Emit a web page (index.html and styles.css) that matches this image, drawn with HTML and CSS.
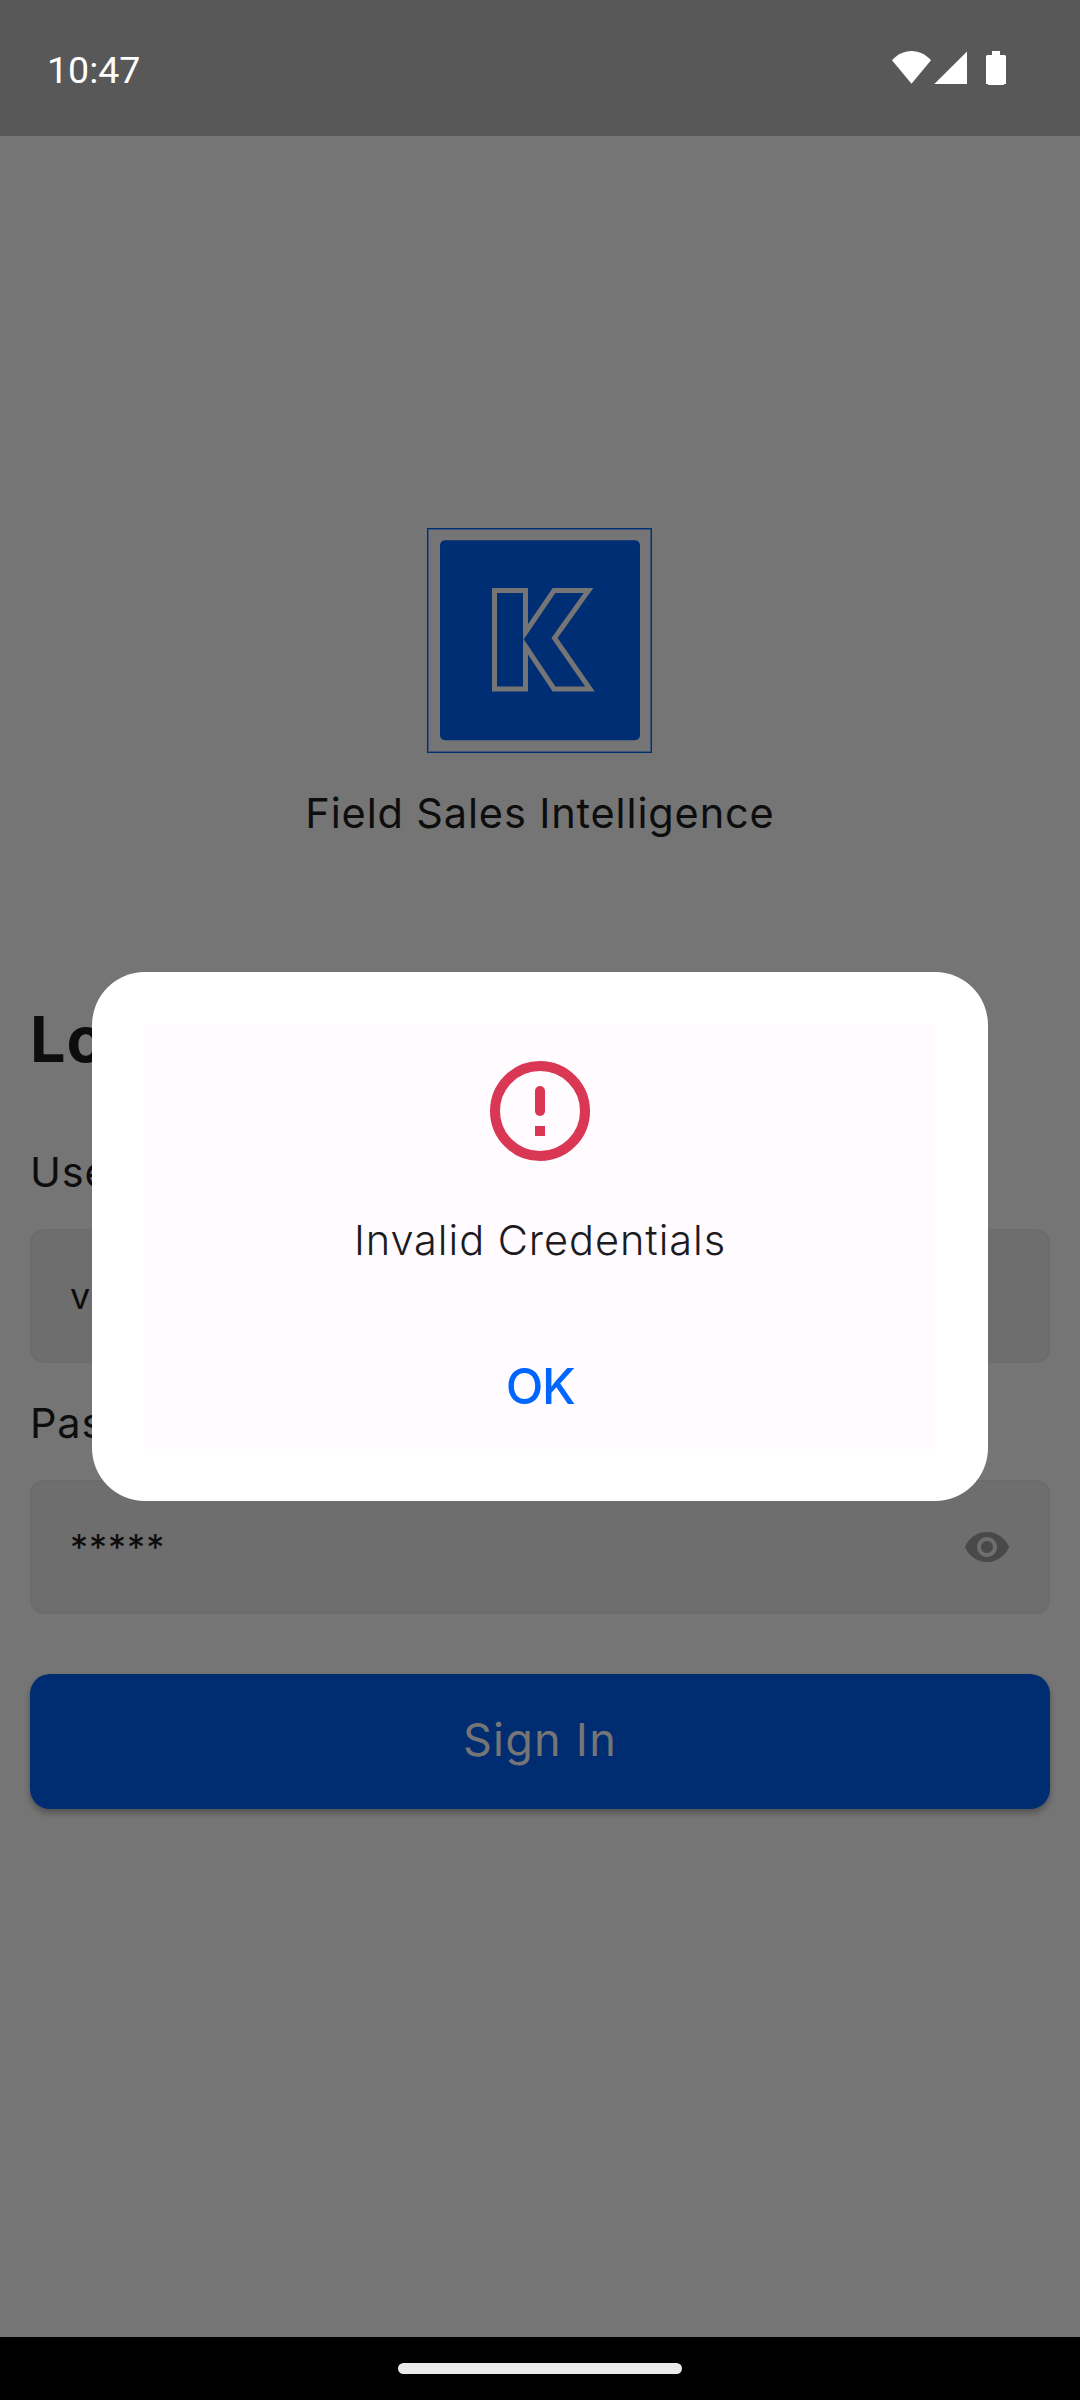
FILE: index.html
```html
<!DOCTYPE html>
<html lang="en">
<head>
<meta charset="utf-8">
<title>Login</title>
<link rel="stylesheet" href="styles.css">
</head>
<body>
<div class="screen">
  <header class="status">
    <span class="clock">10:47</span>
    <svg class="status-icons" width="116" height="36" viewBox="0 0 116 36" fill="#fff">
      <path d="M0 9.300C5 3.600 12 0 19.500 0S34 3.600 39 9.300L19.500 32.700Z"/>
      <path d="M42.300 33L75 .5V33Z"/>
      <path d="M100 0h8v4h5l1 1v28h-2v1h-16v-1h-2V5l1-1h5z"/>
    </svg>
  </header>

  <main class="login">
    <svg class="logo" width="225" height="225" viewBox="0 0 225 225">
      <clipPath id="arm"><rect x="96.300" y="50" width="80" height="120"/></clipPath>
      <rect x="1" y="1" width="223" height="223" fill="none" stroke="#3f567a" stroke-width="2"/>
      <rect x=".5" y=".5" width="224" height="224" fill="none" stroke="#002e75"/>
      <rect x="13" y="12.300" width="200" height="200" rx="5" fill="#002e75"/>
      <g fill="#002e75" stroke="#757575" stroke-width="5">
        <path d="M67.500 62.500H98.500V161H67.500Z"/>
        <path clip-path="url(#arm)" d="M127 62.500H161.500L127.500 110L163 161H127L93.800 111.300Z"/>
      </g>
    </svg>
    <p class="tagline">Field Sales Intelligence</p>
    <h1 class="title">Login</h1>
    <label class="label">Username</label>
    <div class="field"><span>v</span></div>
    <label class="label">Password</label>
    <div class="field">
      <span class="mask">*****</span>
      <svg class="eye" width="48" height="48" viewBox="0 0 24 24" fill="#494949"><path d="M12 4.500C7 4.500 2.730 7.610 1 12c1.730 4.390 6 7.500 11 7.500s9.270-3.110 11-7.500c-1.730-4.390-6-7.500-11-7.500zM12 17c-2.760 0-5-2.240-5-5s2.240-5 5-5 5 2.240 5 5-2.240 5-5 5zm0-8c-1.660 0-3 1.340-3 3s1.340 3 3 3 3-1.340 3-3-1.340-3-3-3z"/></svg>
    </div>
    <button class="submit">Sign In</button>
  </main>

  <footer class="navbar"><div class="handle"></div></footer>

  <div class="overlay">
    <section class="dialog">
      <div class="panel">
        <svg width="120" height="120" viewBox="0 0 24 24">
          <circle cx="12" cy="12" r="9" fill="none" stroke="#da3754" stroke-width="2"/>
          <rect x="11" y="7" width="2" height="6" rx="1" fill="#da3754"/>
          <rect x="11" y="15" width="2" height="2" fill="#da3754"/>
        </svg>
        <p class="message">Invalid Credentials</p>
        <button class="ok">OK</button>
      </div>
    </section>
  </div>
</div>
</body>
</html>
```
FILE: styles.css
```css
* { box-sizing: border-box; }
body { margin: 0; }
p, h1 { margin: 0; }
button { border: 0; padding: 0; background: none; font-family: inherit; }

.screen {
  position: relative;
  width: 1080px;
  height: 2400px;
  display: flex;
  flex-direction: column;
  background: #757575;
  color: #0d0d0d;
  font-family: Inter, sans-serif;
}

.status {
  height: 136px;
  padding: 51px 72px 0 47px;
  display: flex;
  justify-content: space-between;
  align-items: flex-start;
  background: #585858;
}
.clock {
  font: 37.5px/38px Roboto, sans-serif;
  color: #fff;
}

.login {
  flex: 1;
  padding: 392px 30px 0;
  display: flex;
  flex-direction: column;
}
.logo { align-self: center; margin-right: 1px; }
.tagline {
  margin-top: 35px;
  text-align: center;
  font-size: 41.5px;
  line-height: 50px;
  letter-spacing: .85px;
}
.title {
  margin-top: 163px;
  font-size: 63px;
  line-height: 76px;
  font-weight: 700;
  letter-spacing: 1px;
}
.label {
  margin-top: 70px;
  font-size: 41.5px;
  line-height: 50px;
  letter-spacing: .85px;
}
.field {
  height: 134px;
  margin-top: 32px;
  padding: 0 37px 1px 38px;
  display: flex;
  align-items: center;
  justify-content: space-between;
  background: #6e6e6e;
  border: 2px solid #6c6c6c;
  border-radius: 14px;
  font-size: 36px;
  letter-spacing: 1px;
}
.field + .label { margin-top: 35px; }
.submit {
  height: 135px;
  margin-top: 59.5px;
  padding-bottom: 3px;
  border-radius: 20px;
  background: #002d72;
  color: #757575;
  font-size: 45px;
  letter-spacing: 1.25px;
  box-shadow: 0 4px 6px rgba(0, 0, 0, .3);
}

.navbar {
  height: 63px;
  padding-top: 26px;
  display: flex;
  justify-content: center;
  background: #000;
}
.handle { width: 284px; height: 11px; border-radius: 6px; background: #eaeaea; }

/* modal layer above the login form */
.overlay {
  position: absolute;
  inset: 0;
  display: flex;
  justify-content: center;
  padding-top: 971.5px;
}
.dialog {
  width: 896px;
  height: 529.5px;
  padding: 52.5px;
  border-radius: 53px;
  background: #fff;
}
.panel {
  height: 425px;
  padding-top: 27px;
  display: flex;
  flex-direction: column;
  align-items: center;
  background: #fffbff;
  border-radius: 3px;
}
.message {
  margin-top: 44px;
  font-size: 41.5px;
  line-height: 50px;
  font-weight: 300;
  letter-spacing: .95px;
  color: #1c1b1f;
}
.ok {
  margin-top: 92px;
  font-size: 49px;
  line-height: 60px;
  font-weight: 500;
  letter-spacing: -1.5px;
  color: #0066ff;
}
```
